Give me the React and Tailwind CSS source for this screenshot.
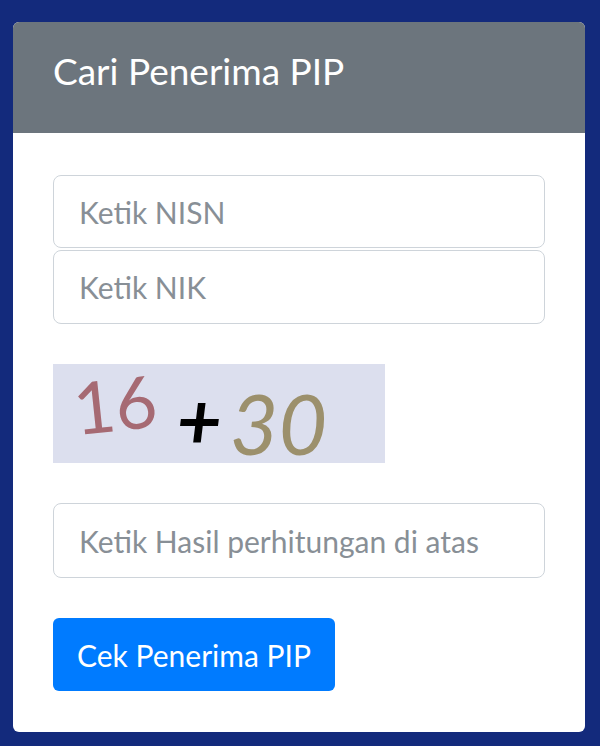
export default function App() {
  const font = { fontFamily: "Lato, 'Noto Sans', sans-serif" };
  return (
    <div className="w-[600px] h-[746px] bg-[#132a7c] pt-[22px] px-[13px]" style={font}>
      <div className="w-[572px] h-[710px] bg-white rounded-[6px] overflow-hidden flex flex-col">
        <div className="h-[111px] bg-[#6c757d] flex items-start pt-[30px] px-[40px]">
          <h1 className="text-white text-[37px] leading-none">Cari Penerima PIP</h1>
        </div>
        <div className="px-[40px] pt-[42px] flex flex-col">
          <input
            className="h-[73px] w-full border border-[#ced4da] rounded-[8px] px-[25px] text-[30px] placeholder-[#888f96] outline-none"
            placeholder="Ketik NISN"
          />
          <input
            className="mt-[2px] h-[74px] w-full border border-[#ced4da] rounded-[8px] px-[25px] text-[30px] placeholder-[#888f96] outline-none"
            placeholder="Ketik NIK"
          />
          <div className="mt-[40px] w-[332px] h-[99px] bg-[#dcdfee] flex items-start pl-[20px]">
            <span className="mt-[3px] text-[72px] text-[#a66a73] leading-none -rotate-6">16</span>
            <span className="mt-[16px] ml-[20px] text-[78px] font-bold text-black leading-none italic">+</span>
            <span className="mt-[17px] ml-[8px] text-[84px] text-[#9c906c] leading-none italic">30</span>
          </div>
          <input
            className="mt-[40px] h-[75px] w-full border border-[#ced4da] rounded-[8px] px-[25px] text-[30px] placeholder-[#888f96] outline-none"
            placeholder="Ketik Hasil perhitungan di atas"
          />
          <button className="mt-[40px] w-[282px] h-[73px] bg-[#007bff] rounded-[6px] text-white text-[30px] whitespace-nowrap text-center px-0 leading-none">
            Cek Penerima PIP
          </button>
        </div>
      </div>
    </div>
  );
}
